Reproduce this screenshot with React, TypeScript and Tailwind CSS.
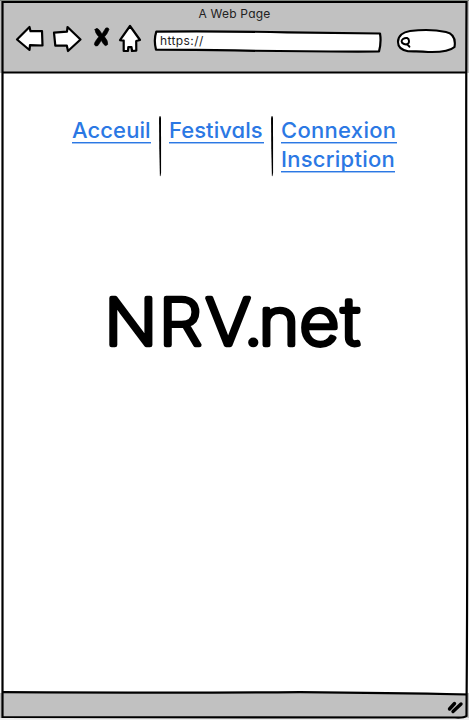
import React from 'react';

const font = "font-['Inter','Noto_Sans',sans-serif] [font-feature-settings:'cv11','ss03']";

function Link({ children, className }: { children: string; className: string }) {
  return (
    <a href="#" className={`block h-[27px] whitespace-nowrap border-b border-[#2b78e4] pt-px text-[22px] leading-[27px] font-medium text-[#2b78e4] shadow-[0_1px_0_rgba(43,120,228,0.45)] ${className}`}>
      {children}
    </a>
  );
}

function Divider() {
  return (
    <svg className="block shrink-0" width="3" height="61" viewBox="0 0 3 61">
      <path d="M.7 0 Q1.6 -.3 2 2 L2.1 56 Q1.7 61 .9 60 Q0 30 .1 2 Z" fill="black" />
    </svg>
  );
}

function Toolbar() {
  return (
    <div className="flex h-[38px] items-center">
      <svg className="ml-[14px] h-[38px] w-[128px] shrink-0" viewBox="14 20 128 38" fill="white" stroke="black" strokeWidth="2.2" strokeLinejoin="round" strokeLinecap="round">
        <path d="M17 37.5 L29.5 25 L30.5 29.2 L42 29 L42.5 43.5 L30 43.2 L29.5 48 Z" />
        <path d="M54 30.7 L67 29.7 L67.5 25 L80.5 37.5 L68 49 L66.8 43.5 L55.3 43.6 Z" />
        <path d="M95 27.5 Q97 25 99.3 28 L102 32 L105.8 26 Q108.8 25.2 109 27.5 Q107.3 32 104.5 34.8 Q108.2 39 107.7 42.5 Q105.5 45 103.5 42 L101.3 38.5 L98 43.5 Q95.5 45 94.4 42.7 Q94 40.5 98.8 34.8 Q95 31 95 27.5 Z" fill="black" strokeWidth=".6" />
        <path d="M130 24 L120 38.2 L123.7 38.6 L123.7 49 L128 49 L128.3 45.2 L131.5 45.2 L132 49 L136.3 48.6 L136.2 39 L140 38 Z" />
      </svg>
      <div className="relative ml-[11px] h-[24px] w-[230px] shrink-0">
        <svg className="absolute inset-0" width="230" height="24" viewBox="153 29 230 24">
          <path d="M156.3 31.6 Q220 31 287 32.3 Q338 33 380 33.5 Q381.5 42 379 51.5 Q300 51.7 235 50.4 Q195 49.6 156 49.6 Q153.5 40 156.3 31.6 Z" fill="white" stroke="black" strokeWidth="2.2" strokeLinejoin="round" />
        </svg>
        <span className="relative ml-[7px] block text-[12px] leading-[24px] tracking-[0.4px] text-[#222]">https://</span>
      </div>
      <svg className="ml-[12px] shrink-0" width="62" height="28" viewBox="395 27 62 28" fill="none" stroke="black" strokeWidth="2.1" strokeLinecap="round">
        <path d="M410 31 C423 29.4 436 29.8 446 32 C455 34 455.5 41 454.5 47 C449 52 438 52.3 428 52 C421 51 415 51.6 408 51.3 C401 50 398 46 398 42 C398 36 403 32 410 31 Z" fill="white" />
        <path d="M403 39 C406 37 409 37.8 409 41 C409.3 44 407 45 404 44 C401 43 401 40.5 403 39 Z M407 44 L409.4 46.7" strokeWidth="2" />
      </svg>
    </div>
  );
}

export default function App() {
  return (
    <div className={`relative flex h-[720px] w-[469px] flex-col bg-white text-black ${font}`}>
      <header className="h-[73px] shrink-0 bg-[#c1c1c1]">
        <div className="h-[22px] pt-[6px] text-center text-[12px] leading-[16px] tracking-[0.2px] text-[#222]">A Web Page</div>
        <Toolbar />
      </header>
      <main className="flex-1">
        <nav className="flex pt-[43px] pl-[72px]">
          <Link className="mr-[8px] w-[79px] tracking-[0.1px]">Acceuil</Link>
          <Divider />
          <Link className="mr-[7px] ml-[7px] w-[95px] tracking-[0.05px]">Festivals</Link>
          <Divider />
          <div className="ml-[7px]">
            <Link className="w-[116px] tracking-[0.3px]">Connexion</Link>
            <Link className="mt-[2px] w-[114px] tracking-[0.25px]">Inscription</Link>
          </div>
        </nav>
        <h1 className="mt-[103px] ml-[100px]">
          <svg width="270" height="80" viewBox="100 280 270 80" className="block">
            <text transform="scale(1.06 1)" x="98.7 150 193.8 230 244 282.5 322" y="345" fontSize="65" fontWeight="200" stroke="black" strokeWidth="4.6" strokeLinejoin="round" strokeLinecap="round">NRV.net</text>
          </svg>
        </h1>
      </main>
      <footer className="h-[27px] shrink-0 border-b-2 border-[#eeeeee] bg-[#c1c1c1]" />
      <svg className="pointer-events-none absolute inset-0" width="469" height="720" fill="none" stroke="black" strokeWidth="2.2" strokeLinecap="round">
        <path d="M0 .5 H469" stroke="#808680" strokeWidth="1" />
        <path d="M2.5 2 H466.5 Q465.8 160 466.8 350 T466.5 716 Q464 718 455 717.5 Q240 718 2.5 717 Q1.8 500 2.5 350 Q1.8 160 2.5 2 Z M3 72.5 H466" />
        <path d="M3 692.2 Q180 693 300 692.2 Q390 693 466 694.5" />
        <path d="M449.5 709 L454.5 703.5 M453 711.5 L461 704" strokeWidth="3.4" />
      </svg>
    </div>
  );
}
